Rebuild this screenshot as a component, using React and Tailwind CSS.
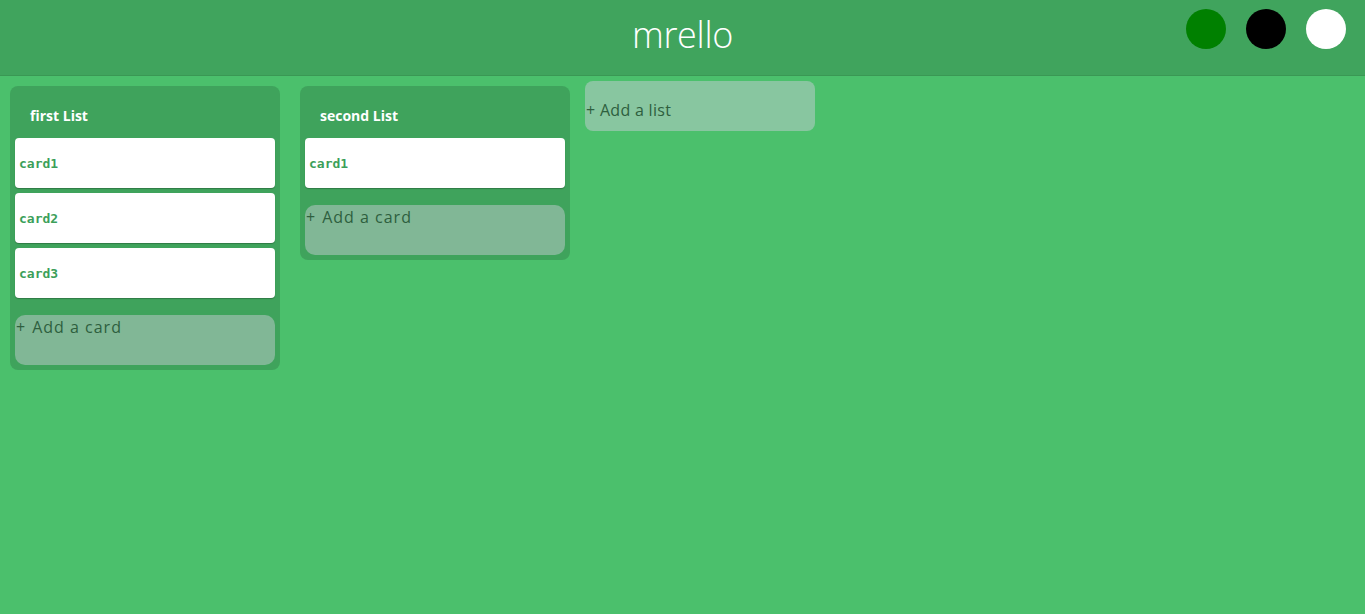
import { useState } from 'react';

const LISTS = [
  { id: 1, title: 'first List', cards: ['card1', 'card2', 'card3'] },
  { id: 2, title: 'second List', cards: ['card1'] },
];

function Card({ text }) {
  return (
    <div className="mb-[5px] flex h-[50px] items-center rounded-[4px] bg-white pl-[4px] pt-[1px] shadow-[0_1px_1px_rgba(0,0,0,0.25)]">
      <span className="font-['DejaVu_Sans_Mono',monospace] text-[13px] font-bold text-[#3c9f5a]">{text}</span>
    </div>
  );
}

function List({ list }) {
  return (
    <div className="m-[10px] w-[270px] shrink-0 rounded-[8px] bg-[#3fa35c] p-[5px]">
      <div className="flex h-[47px] items-center pl-[15px] pt-[1px] text-[14px] font-bold text-white">
        {list.title}
      </div>
      {list.cards.map((c, i) => (
        <Card key={i} text={c} />
      ))}
      <div className="mt-[17px] h-[50px] rounded-[10px] bg-[#81b796] pl-[1px] pt-[1px] text-[16px] leading-[22px] tracking-[1px] text-[#2e5f3e]">
        <span className="mr-[6px]">+</span>Add a card
      </div>
    </div>
  );
}

export default function App() {
  const [lists] = useState(LISTS);

  return (
    <div className="min-h-[614px] bg-[#4bc06c] font-['Open_Sans',sans-serif]">
      <header className="relative flex h-[76px] items-center justify-center border-b border-[#3a9854] bg-[#40a45d] pb-[6px]">
        <h1 className="text-[36px] font-light leading-none tracking-[-0.3px] text-white">mrello</h1>
        <div className="absolute right-[19px] top-[9px] flex gap-[20px]">
          <span className="h-[40px] w-[40px] rounded-full bg-[#008000]" />
          <span className="h-[40px] w-[40px] rounded-full bg-black" />
          <span className="h-[40px] w-[40px] rounded-full bg-white" />
        </div>
      </header>
      <main className="flex items-start">
        {lists.map((l) => (
          <List key={l.id} list={l} />
        ))}
        <div className="m-[5px] flex h-[50px] w-[230px] shrink-0 items-center rounded-[8px] bg-[#88c6a0] pt-[7px] pl-[1px] text-[16px] tracking-[0.3px] text-[#2e5f3e]">
          + Add a list
        </div>
      </main>
    </div>
  );
}
